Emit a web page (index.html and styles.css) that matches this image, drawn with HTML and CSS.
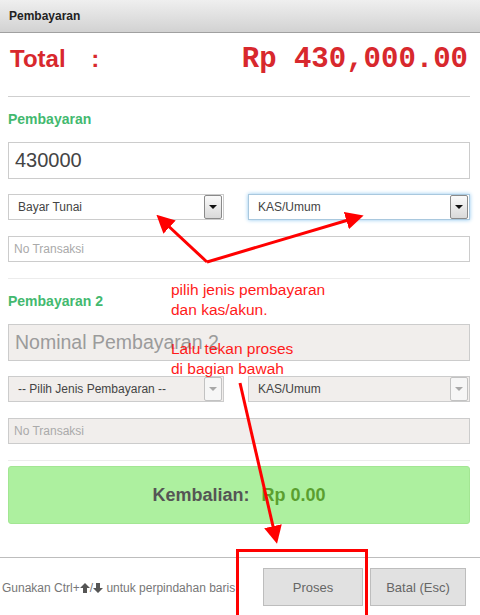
FILE: index.html
```html
<!DOCTYPE html>
<html>
  <head>
    <link rel="stylesheet" href="styles.css">
  </head>

  <body>

    <div class="header">Pembayaran</div>

    <div class="content">
      <div class="total-row">
        <span class="total-label">Total <span class="colon">:</span></span>
        <span class="total-value">Rp 430,000.00</span>
      </div>
      <div class="divider"></div>

      <div class="section-title">Pembayaran</div>
      <div class="field big">430000</div>
      <div class="row">
        <div class="select left">
          <span class="select-text">Bayar Tunai</span>
          <span class="select-btn"><span class="caret"></span></span>
        </div>
        <div class="select right focused">
          <span class="select-text">KAS/Umum</span>
          <span class="select-btn"><span class="caret"></span></span>
        </div>
      </div>
      <div class="field small placeholder">No Transaksi</div>
      <div class="divider light"></div>

      <div class="section-title">Pembayaran 2</div>
      <div class="field big disabled placeholder">Nominal Pembayaran 2</div>
      <div class="row">
        <div class="select left disabled">
          <span class="select-text">-- Pilih Jenis Pembayaran --</span>
          <span class="select-btn"><span class="caret"></span></span>
        </div>
        <div class="select right disabled">
          <span class="select-text">KAS/Umum</span>
          <span class="select-btn"><span class="caret"></span></span>
        </div>
      </div>
      <div class="field small disabled placeholder">No Transaksi</div>
      <div class="divider light"></div>

      <div class="change-box">
        <span class="change-label">Kembalian:</span>
        <span class="change-value">Rp 0.00</span>
      </div>
    </div>

    <div class="footer">
      <div class="hint">
        Gunakan Ctrl+<svg class="key-arrow" viewBox="0 0 10 10"><path d="M5 0 L10 5 L7 5 L7 10 L3 10 L3 5 L0 5 Z"/></svg>/<svg class="key-arrow" viewBox="0 0 10 10"><path d="M5 10 L10 5 L7 5 L7 0 L3 0 L3 5 L0 5 Z"/></svg> untuk perpindahan baris
      </div>
      <button class="btn btn-proses">Proses</button>
      <button class="btn btn-batal">Batal (Esc)</button>
    </div>

    <!-- annotations drawn over the screenshot -->
    <svg class="overlay" width="480" height="615" viewBox="0 0 480 615">
      <defs>
        <marker id="head" markerWidth="6" markerHeight="6" refX="3" refY="3" orient="auto" markerUnits="strokeWidth">
          <path d="M0 0 L6 3 L0 6 Z" fill="#ff0000"/>
        </marker>
      </defs>
      <line x1="207" y1="262" x2="163" y2="221" stroke="#ff0000" stroke-width="3" marker-end="url(#head)"/>
      <line x1="207" y1="262" x2="355" y2="218" stroke="#ff0000" stroke-width="3" marker-end="url(#head)"/>
      <line x1="240" y1="383" x2="275" y2="535" stroke="#ff0000" stroke-width="3" marker-end="url(#head)"/>
      <rect x="237.5" y="550.5" width="129" height="70" fill="none" stroke="#ff0000" stroke-width="3"/>
    </svg>
    <div class="note note-one">pilih jenis pembayaran<br>dan kas/akun.</div>
    <div class="note note-two">Lalu tekan proses<br>di bagian bawah</div>

  </body>

</html>
```

FILE: styles.css
```css
body {
  margin: 0;
  font-family: "Liberation Sans", Arial, sans-serif;
  background: #fff;
  position: relative;
  width: 480px;
  height: 615px;
  overflow: hidden;
}

.header {
  height: 32px;
  line-height: 32px;
  padding-left: 9px;
  font-size: 12px;
  font-weight: bold;
  color: #222;
  background: linear-gradient(#efefef, #d2d2d2);
  border-bottom: 1px solid #a0a0a0;
}

.content {
  padding: 0 10px 0 8px;
}

.total-row {
  display: flex;
  justify-content: space-between;
  align-items: center;
  height: 42px;
  margin-top: 5px;
  margin-bottom: 16px;
  color: #d8282d;
}

.total-label {
  font-size: 24px;
  font-weight: bold;
  padding-left: 2px;
}

.total-label .colon {
  margin-left: 19px;
}

.total-value {
  font-family: "Liberation Mono", "Courier New", monospace;
  font-size: 29px;
  font-weight: bold;
  padding-right: 2px;
}

.divider {
  border-top: 1px solid #cfcfcf;
}

.divider.light {
  border-top-color: #ececec;
  margin-top: 16px;
}

.section-title {
  margin-top: 12px;
  height: 20px;
  line-height: 20px;
  font-size: 14px;
  font-weight: bold;
  color: #43b96f;
}

.field {
  box-sizing: border-box;
  border: 1px solid #cccccc;
  background: #fff;
  color: #444;
}

.field.big {
  margin-top: 13px;
  height: 37px;
  line-height: 35px;
  padding-left: 6px;
  font-size: 20px;
}

.field.small {
  margin-top: 16px;
  height: 26px;
  line-height: 24px;
  padding-left: 5px;
  font-size: 12px;
}

.field.placeholder {
  color: #aaa;
}

.field.disabled {
  background: #f1eeec;
}

.field.big.placeholder {
  color: #9b9b9b;
  font-size: 19.5px;
}

.row {
  display: flex;
  justify-content: space-between;
  margin-top: 15px;
}

.select {
  box-sizing: border-box;
  display: flex;
  height: 26px;
  border: 1px solid #cccccc;
  background: #fff;
  font-size: 12px;
  color: #444;
}

.select.left {
  width: 216px;
}

.select.right {
  width: 222px;
}

.select.focused {
  border-color: #a9c8de;
  box-shadow: 0 0 4px #8ec7ef;
}

.select.disabled {
  background: #f1eeec;
}

.select-text {
  flex: 1;
  line-height: 24px;
  padding-left: 9px;
}

.select-btn {
  width: 16px;
  margin: 0 1px 0 0;
  border: 1px solid #8a8a8a;
  border-radius: 2px;
  background: linear-gradient(#fafafa, #d9d9d9);
  display: flex;
  align-items: center;
  justify-content: center;
}

.select.disabled .select-btn {
  border-color: #c2c2c2;
  background: #f6f6f6;
}

.caret {
  width: 0;
  height: 0;
  border-left: 4px solid transparent;
  border-right: 4px solid transparent;
  border-top: 4px solid #111;
}

.select.disabled .caret {
  border-top-color: #a8a8a8;
}

.change-box {
  margin-top: 5px;
  height: 58px;
  box-sizing: border-box;
  border: 1px solid #a3e693;
  border-radius: 3px;
  background: #adf09f;
  display: flex;
  align-items: center;
  justify-content: center;
  font-size: 18px;
  font-weight: bold;
}

.change-label {
  color: #555;
  margin-right: 12px;
}

.change-value {
  color: #5b9f2f;
}

.footer {
  margin-top: 33px;
  border-top: 1px solid #bdbdbd;
  display: flex;
  align-items: flex-start;
  padding-top: 10px;
  height: 58px;
  box-sizing: border-box;
}

.hint {
  width: 261px;
  padding-left: 2px;
  margin-top: 13px;
  font-size: 12px;
  color: #777;
  white-space: nowrap;
}

.key-arrow {
  width: 10px;
  height: 10px;
  fill: #555;
  vertical-align: -1px;
}

.btn {
  height: 38px;
  border: 1px solid #bdbdbd;
  background: #e1e1e1;
  font-family: "Liberation Sans", Arial, sans-serif;
  font-size: 13px;
  color: #666;
}

.btn-proses {
  width: 100px;
}

.btn-batal {
  width: 96px;
  margin-left: 7px;
}

.overlay {
  position: absolute;
  left: 0;
  top: 0;
  pointer-events: none;
}

.note {
  position: absolute;
  left: 171px;
  font-size: 15.5px;
  line-height: 20px;
  color: #ff1a1a;
}

.note-one {
  top: 280px;
}

.note-two {
  top: 339px;
}
```
